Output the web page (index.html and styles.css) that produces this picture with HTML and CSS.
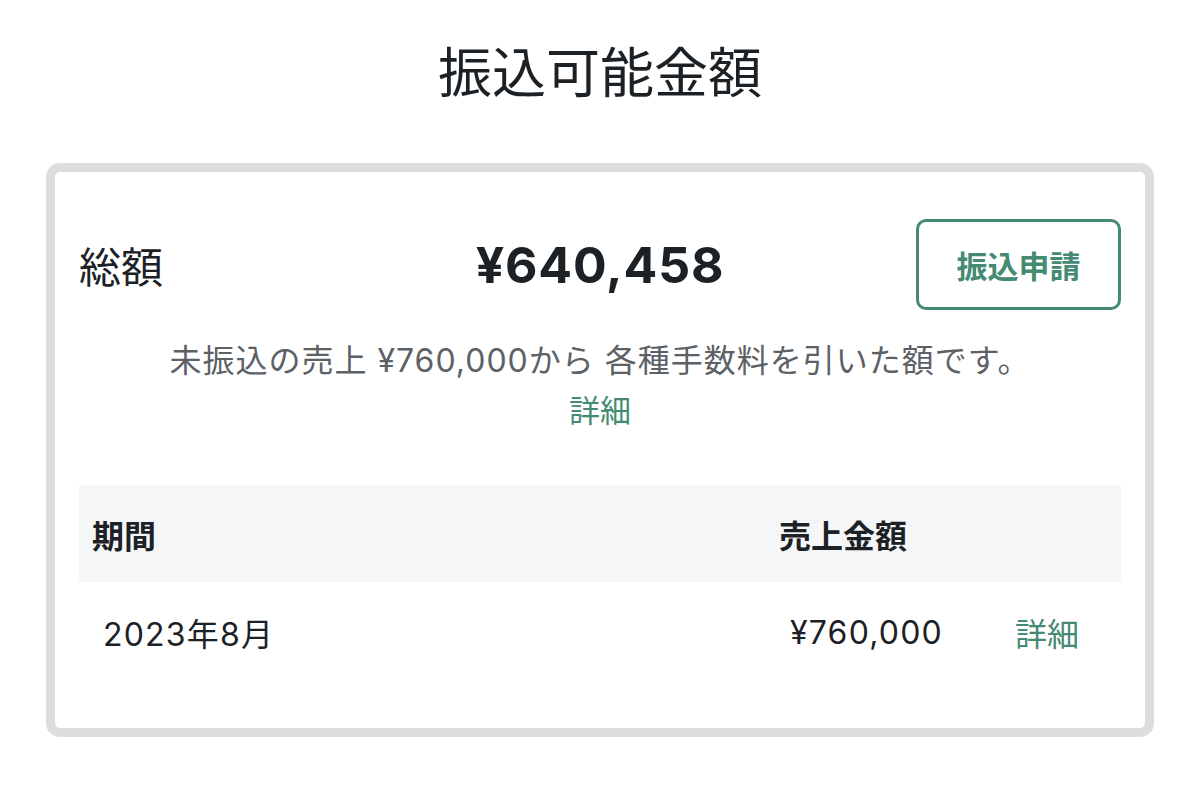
FILE: index.html
```html
<!DOCTYPE html>
<html lang="ja">
<head>
<meta charset="UTF-8">
<meta name="viewport" content="width=device-width, initial-scale=1.0">
<title>振込可能金額</title>
<link rel="stylesheet" href="styles.css">
</head>
<body>

<h1 class="page-title">振込可能金額</h1>

<div class="balance-card">
  <div class="total-row">
    <span class="total-label">総額</span>
    <span class="total-amount">¥640,458</span>
    <button class="apply-btn" type="button">振込申請</button>
  </div>

  <p class="note">未振込の売上 ¥760,000から 各種手数料を引いた額です。</p>
  <a class="link note-link" href="#">詳細</a>

  <div class="sales-table">
    <div class="table-head">
      <div class="head-cell">期間</div>
      <div class="head-cell">売上金額</div>
      <div class="head-cell"></div>
    </div>
    <div class="table-row">
      <div class="row-cell">2023年8月</div>
      <div class="row-cell">¥760,000</div>
      <div class="row-cell"><a class="link row-link" href="#">詳細</a></div>
    </div>
  </div>
</div>

</body>
</html>
```

FILE: styles.css
```css
/* page */
body {
  margin: 0;
  background-color: #ffffff;
  color: #1c2126;
  font-family: "Inter", "Noto Sans CJK JP", sans-serif;
}

.page-title {
  margin: 36px 0 51px;
  font-size: 54px;
  font-weight: 400;
  line-height: 76px;
  text-align: center;
}

.balance-card {
  margin: 0 46px;
  padding: 47px 24px 46px;
  border: 9px solid #dcdedd;
  border-radius: 14px;
  text-align: center;
}

.total-row {
  display: grid;
  grid-template-columns: 1fr auto 1fr;
  align-items: center;
}

.total-label {
  justify-self: start;
  font-size: 42px;
}

.total-amount {
  font-size: 50px;
  font-weight: 700;
  letter-spacing: 0.8px;
}

.apply-btn {
  justify-self: end;
  width: 205px;
  height: 91px;
  background-color: #ffffff;
  color: #458a72;
  border: 3px solid #458a72;
  border-radius: 10px;
  font-family: "Noto Sans CJK JP", sans-serif;
  font-size: 31px;
  font-weight: 700;
  cursor: pointer;
}

.note {
  margin: 26px 0 0;
  font-size: 32px;
  line-height: 50px;
  letter-spacing: 1px;
  color: #5c6166;
}

.link {
  color: #458a72;
  text-decoration: none;
}

.note-link {
  display: block;
  font-size: 31px;
  line-height: 50px;
}

.sales-table {
  margin-top: 49px;
  text-align: left;
}

.table-head,
.table-row {
  display: grid;
  grid-template-columns: 1fr 225px 130px;
  align-items: center;
}

.table-head {
  height: 97px;
  background-color: #f5f6f7;
}

.head-cell {
  padding-left: 13px;
  font-size: 32px;
  font-weight: 700;
}

.table-row {
  height: 100px;
}

.row-cell {
  padding-left: 24px;
  font-size: 32px;
  letter-spacing: 1.2px;
}

.row-link {
  letter-spacing: 0;
}
```
